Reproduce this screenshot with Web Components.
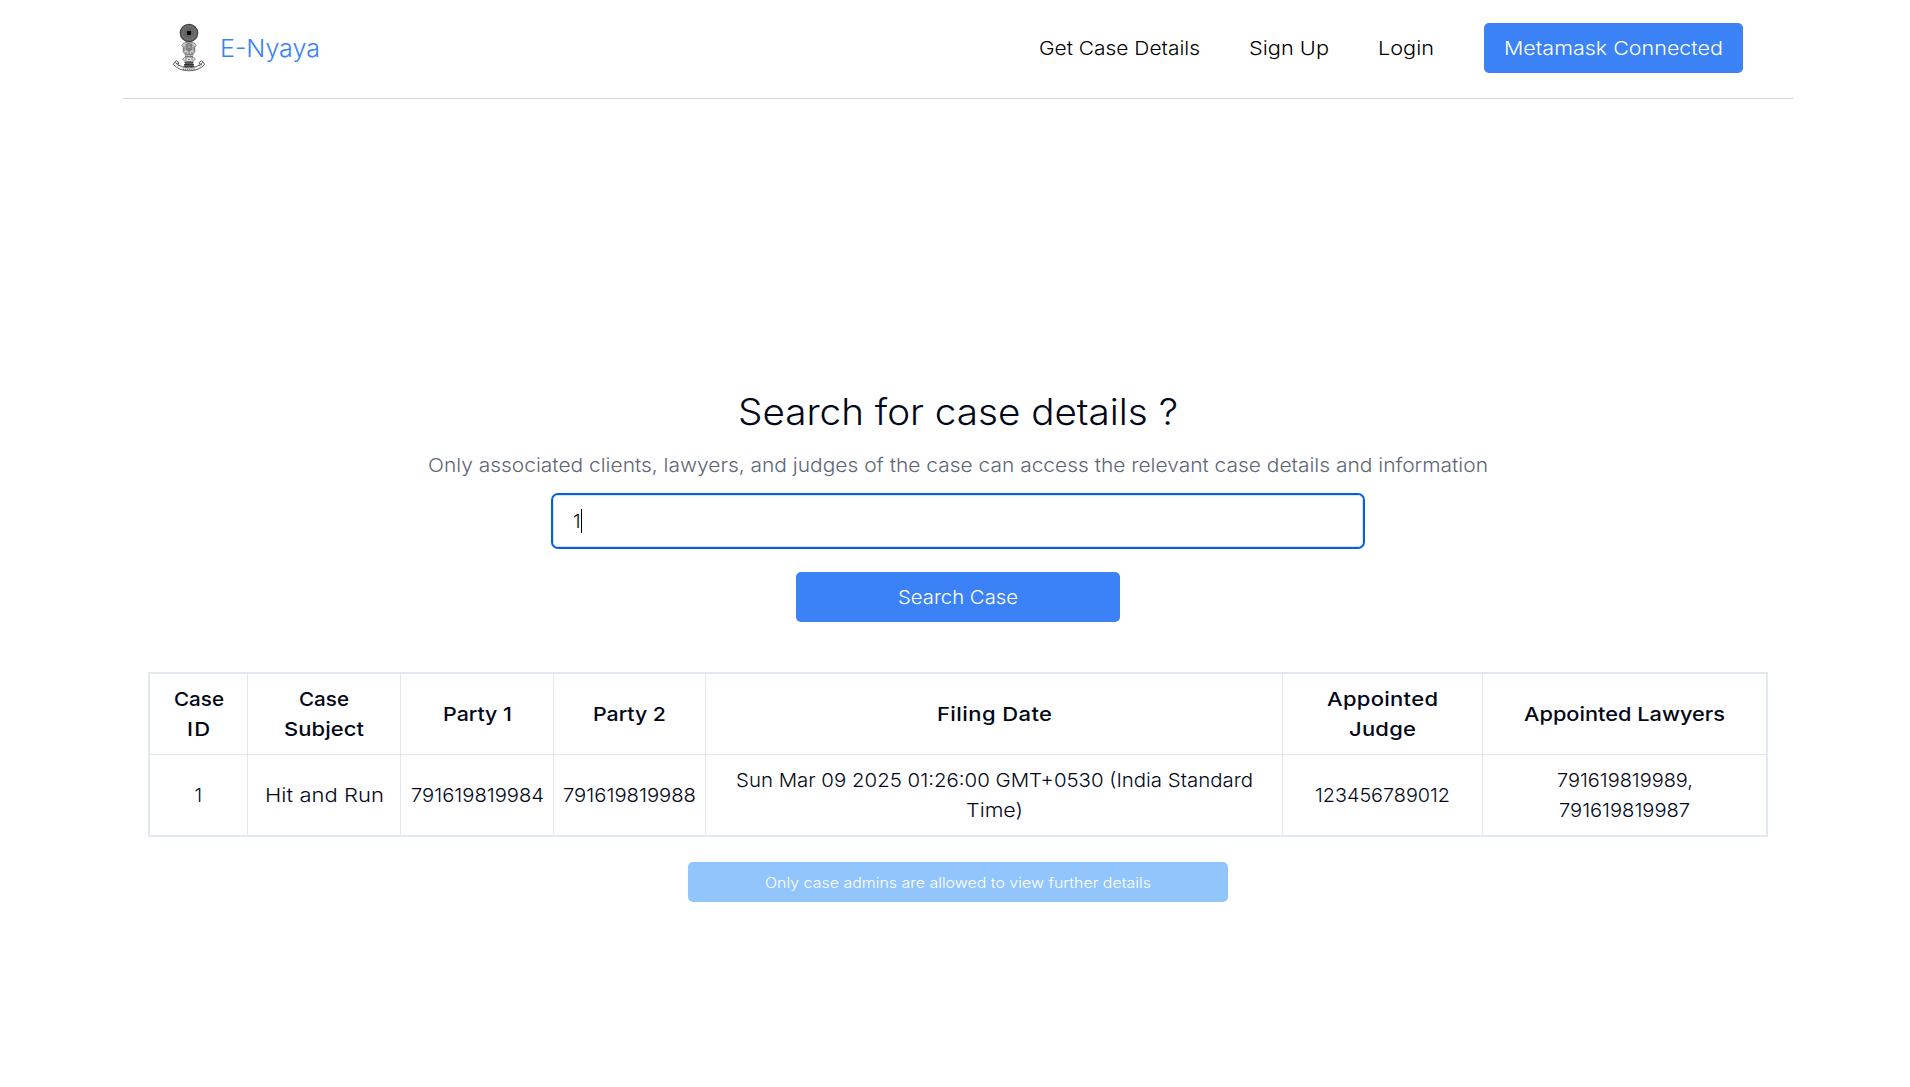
<!DOCTYPE html>
<html lang="en">
<head>
<meta charset="utf-8">
<title>E-Nyaya</title>
<style>
  html, body { margin: 0; background: #fff; }
  body { font-family: Inter, "Open Sans", sans-serif; font-weight: 300; font-size: 19.3px; line-height: 30px; color: #020817; height: 1087px; overflow: hidden; }
</style>
</head>
<body>
<nyaya-app></nyaya-app>
<script>
// A single line that is widened to span the width "w": first by stretching
// the letters a little, then by tracking for whatever is left over.
class FitText extends HTMLElement {
  connectedCallback() {
    const root = this.attachShadow({ mode: 'open' });
    const w = parseFloat(this.getAttribute('w'));
    root.innerHTML = `<style>:host{display:inline-block;white-space:nowrap;text-align:left;width:${w}px;vertical-align:top}span{display:inline-block;transform-origin:0 50%}</style><span><slot></slot></span>`;
    const span = root.querySelector('span');
    const n = this.textContent.trim().length;
    if (n < 2) return;
    const natural = span.getBoundingClientRect().width;
    const s = Math.min(1.14, Math.max(0.96, w / natural));
    span.style.letterSpacing = ((w / s - natural) / (n - 1)).toFixed(3) + 'px';
    span.style.transform = `scaleX(${s.toFixed(4)})`;
  }
}
customElements.define('fit-text', FitText);

const define = (name, html) => customElements.define(name, class extends HTMLElement {
  connectedCallback() {
    if (!this.shadowRoot) this.attachShadow({ mode: 'open' }).innerHTML = html;
  }
});

define('court-emblem', `
<style>:host{display:block;width:34px;height:50px}svg{display:block}</style>
<svg width="34" height="50" viewBox="0 0 34 50" fill="none">
  <circle cx="17" cy="10" r="8.7" fill="#6c6c6c" stroke="#444" stroke-width="1.2"/>
  <circle cx="17" cy="10" r="6.6" stroke="#8a8a8a" stroke-width=".6"/>
  <path d="M17 2v16M9 10h16M11.3 4.3l11.4 11.4M22.7 4.3L11.3 15.7M14 2.6l6 14.8M20 2.6l-6 14.8M9.6 7l14.8 6M9.6 13l14.8-6" stroke="#505050" stroke-width=".5"/>
  <rect x="15" y="8" width="4" height="4" fill="#080808"/>
  <path d="M11 20.5q3-1.8 6-.7q3-1.1 6 .7l1.2 2-1.5 2 .3 4-2 3h-8l-2-3 .3-4-1.5-2z" fill="#c9c9c9" stroke="#777" stroke-width=".8"/>
  <path d="M14 21.5q3-2 6 0v5q-3 3-6 0z" fill="#999" stroke="#555" stroke-width=".6"/>
  <path d="M15 23h1M18 23h1M15.5 26h3M12 23.5v5M22 23.5v5M14 29v3M17 28v4M20 29v3" stroke="#555" stroke-width=".8"/>
  <path d="M12.5 32.5h9l-1 2.5h-7z" fill="#777"/>
  <ellipse cx="17" cy="36.2" rx="6.2" ry="2.3" fill="#ddd" stroke="#777" stroke-width=".8"/>
  <path d="M13 36h2M16 36.5h2M19 36h2" stroke="#666" stroke-width=".7"/>
  <path d="M12.5 38.7h9v1.2h-9z" fill="#333"/>
  <path d="M13 39.8h8l1 4h-10z" fill="#666"/>
  <path d="M12 41.5h10M11.5 43.4h11" stroke="#222" stroke-width=".8"/>
  <path d="M1.2 41.2l3-3.6 2.8 2-1.2 2.2q4.8 3 11.2 3t11.2-3l-1.2-2.2 2.8-2 3 3.6q-5.5 6.6-15.8 6.6T1.2 41.2z" fill="#f4f4f4" stroke="#555" stroke-width=".9"/>
  <path d="M4 41l2-1M6 43.3l1.4-1.5M28 41l2 1M26.6 41.8l1.4 1.5M3.2 39.4l2.6 2.2M30.8 39.4l-2.6 2.2" stroke="#555" stroke-width=".9"/>
  <path d="M11 46.2l12 0" stroke="#777" stroke-width="1.5" stroke-dasharray="1.2 .7"/>
</svg>`);

define('site-header', `
<style>
  :host{display:flex;align-items:center;box-sizing:border-box;width:1670px;height:99px;border-bottom:1px solid #d1d5db;padding:0 50px 2px 49px;color:#000}
  .brand{display:flex;align-items:center;flex:1;gap:14px}
  .name{color:#3b82f6;font-size:24.3px;line-height:32px}
  nav,.links{display:flex;align-items:center}
  .links{gap:49px;margin-right:50px}
  button{font:inherit;line-height:30px;color:#fff;background:#3b82f6;border:0;border-radius:5px;width:259px;height:50px;padding:0}
</style>
<div class="brand"><court-emblem></court-emblem><fit-text class="name" w="100">E-Nyaya</fit-text></div>
<nav><div class="links"><fit-text w="161">Get Case Details</fit-text><fit-text w="80">Sign Up</fit-text><fit-text w="56">Login</fit-text></div>
<button><fit-text w="219">Metamask Connected</fit-text></button></nav>`);

define('search-panel', `
<style>
  :host{display:flex;flex-direction:column;align-items:center;width:1670px}
  h1{margin:0;font-size:36.3px;font-weight:300;line-height:45px}
  p{margin:15px 0 0;color:#5d6675;line-height:30px}
  .field{display:flex;align-items:center;box-sizing:border-box;width:810px;height:52px;margin-top:15px;border:1px solid #dbe3ee;border-radius:5px;box-shadow:0 0 0 2px #0060df;padding-left:19px}
  .caret{width:1px;height:24px;background:#000;margin-left:0}
  button{font:inherit;line-height:30px;color:#fff;background:#3b82f6;border:0;border-radius:5px;width:324px;height:50px;margin-top:25px;padding:0}
</style>
<h1><fit-text w="440">Search for case details ?</fit-text></h1>
<p><fit-text w="1060">Only associated clients, lawyers, and judges of the case can access the relevant case details and information</fit-text></p>
<div class="field" role="textbox"><fit-text w="8">1</fit-text><span class="caret"></span></div>
<button><fit-text w="120">Search Case</fit-text></button>`);

define('case-table', `
<style>
  :host{display:grid;box-sizing:border-box;width:1620px;height:165px;border:2px solid #e2e8f0;
    grid-template-columns:98px 153px 153px 152px 577px 200px 1fr;grid-template-rows:81px 80px}
  div{box-sizing:border-box;display:flex;flex-direction:column;align-items:center;justify-content:center;border-right:1px solid #e2e8f0}
  div:nth-of-type(7n){border-right:0}
  .h{font-weight:500;border-bottom:1px solid #e2e8f0}
</style>
<div class="h"><fit-text w="50">Case</fit-text><fit-text w="23">ID</fit-text></div>
<div class="h"><fit-text w="50">Case</fit-text><fit-text w="80">Subject</fit-text></div>
<div class="h"><fit-text w="69">Party 1</fit-text></div>
<div class="h"><fit-text w="73">Party 2</fit-text></div>
<div class="h"><fit-text w="115">Filing Date</fit-text></div>
<div class="h"><fit-text w="111">Appointed</fit-text><fit-text w="67">Judge</fit-text></div>
<div class="h"><fit-text w="201">Appointed Lawyers</fit-text></div>
<div><fit-text w="8">1</fit-text></div>
<div><fit-text w="119">Hit and Run</fit-text></div>
<div><fit-text w="133">791619819984</fit-text></div>
<div><fit-text w="133">791619819988</fit-text></div>
<div><fit-text w="517">Sun Mar 09 2025 01:26:00 GMT+0530 (India Standard</fit-text><fit-text w="57">Time)</fit-text></div>
<div><fit-text w="135">123456789012</fit-text></div>
<div><fit-text w="136">791619819989,</fit-text><fit-text w="131">791619819987</fit-text></div>`);

define('admin-notice', `
<style>
  :host{display:flex;align-items:center;justify-content:center;box-sizing:border-box;width:540px;height:40px;padding-top:1px;border-radius:5px;background:#93c5fd;color:#fff;font-size:14.6px;line-height:20px}
</style>
<fit-text w="386">Only case admins are allowed to view further details</fit-text>`);

define('nyaya-app', `
<style>
  :host{display:flex;flex-direction:column;align-items:center;width:1670px;margin-left:123px}
  search-panel{margin-top:291px}
  case-table{margin-top:50px}
  admin-notice{margin-top:25px}
</style>
<site-header></site-header><search-panel></search-panel><case-table></case-table><admin-notice></admin-notice>`);
</script>
</body>
</html>
